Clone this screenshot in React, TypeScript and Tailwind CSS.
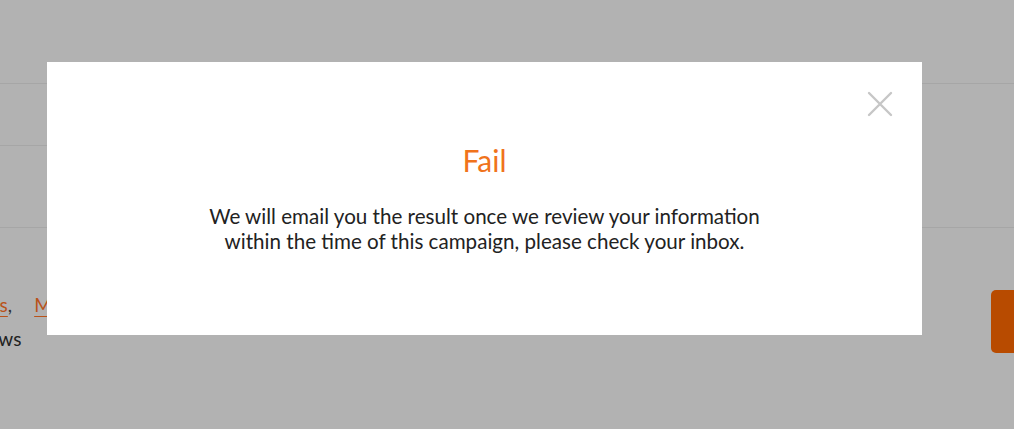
import React from "react";

function CloseIcon() {
  return (
    <svg width="26" height="26" viewBox="0 0 26 26" fill="none">
      <path d="M2 2 L24 24 M24 2 L2 24" stroke="#c6c6c6" strokeWidth="2.4" strokeLinecap="round" />
    </svg>
  );
}

export default function App() {
  return (
    <div
      className="relative w-[1014px] h-[429px] overflow-hidden bg-[#b2b2b2]"
      style={{ fontFamily: "Lato, 'Noto Sans', sans-serif" }}
    >
      {/* page behind the dimmed overlay */}
      <div className="flex flex-col">
        <div className="h-[84px] border-b border-[#a6a6a6]" />
        <div className="h-[62px] border-b border-[#a6a6a6] w-[60px]" />
        <div className="h-[82px] border-b border-[#a6a6a6]" />
        <div className="flex justify-between">
          <div className="pt-[64px] text-[19px] leading-[26px]">
            <div className="flex gap-[22px] ml-[-11px]">
              <span>
                <span className="text-[#b9531a] underline underline-offset-4">us</span>
                <span className="text-[#333]">,</span>
              </span>
              <span className="text-[#b9531a] underline underline-offset-4">More</span>
            </div>
            <div className="ml-[-26px] mt-[8px] text-[#222]">views</div>
          </div>
          <div className="mt-[62px] w-[40px] h-[63px] mr-[-17px] rounded-[5px] bg-[#b84b00]" />
        </div>
      </div>

      {/* dialog */}
      <div className="absolute left-[47px] top-[62px] w-[875px] h-[273px] bg-white">
        <button className="absolute right-[29px] top-[29px] p-0">
          <CloseIcon />
        </button>
        <div className="flex flex-col items-center pt-[80px]">
          <h2 className="text-[30px] leading-[36px] text-[#f0731b]">Fail</h2>
          <p className="mt-[26px] text-center text-[20.6px] leading-[25px] text-[#222]">
            We will email you the result once we review your information
            <br />
            within the time of this campaign, please check your inbox.
          </p>
        </div>
      </div>
    </div>
  );
}
